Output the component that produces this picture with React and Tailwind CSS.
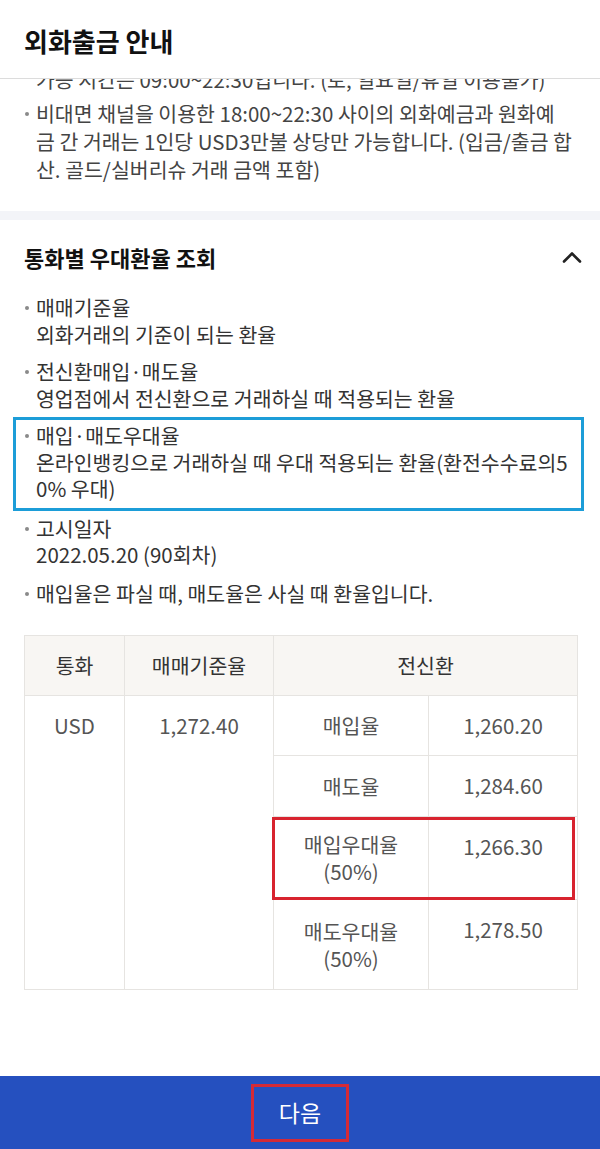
import React from 'react';

const font = "font-['Noto_Sans_CJK_KR','Noto_Sans',sans-serif]";

/** Small grey bullet dot used in front of each notice item. */
function Dot({ top = 'pt-[13px]' }) {
  return (
    <span className={`w-[12px] shrink-0 ${top}`}>
      <span className="block w-[4px] h-[4px] ml-[1px] rounded-full bg-[#8a8a8a]" />
    </span>
  );
}

function Item({ lines, className = '', dot }) {
  return (
    <li className={`flex ${className}`}>
      <Dot top={dot} />
      <div>
        {lines.map((l, i) => (
          <div key={i} className="whitespace-nowrap">{l}</div>
        ))}
      </div>
    </li>
  );
}

function ChevronUp() {
  return (
    <svg width="20" height="12" viewBox="0 0 20 12" fill="none">
      <path d="M2 10.5 10 2.5l8 8" stroke="#222" strokeWidth="2.6" strokeLinecap="round" strokeLinejoin="round" />
    </svg>
  );
}

const rows = [
  { label: ['매입율'], value: '1,260.20', h: 'h-[60px]' },
  { label: ['매도율'], value: '1,284.60', h: 'h-[61px]' },
  { label: ['매입우대율', '(50%)'], value: '1,266.30', h: 'h-[83px]' },
  { label: ['매도우대율', '(50%)'], value: '1,278.50', h: 'h-[90px]' },
];

export default function App() {
  return (
    <div className={`${font} w-[600px] h-[1149px] flex flex-col bg-white overflow-hidden`}>
      {/* header */}
      <header className="h-[79px] shrink-0 border-b border-[#dcdcdc] px-6 pt-[4px] flex items-center">
        <h1 className="text-[26px] font-bold text-[#111] leading-none">외화출금 안내</h1>
      </header>

      <main className="flex-1 overflow-hidden">
        {/* scrolled notice, first item cut by header */}
        <ul className="px-6 text-[20.5px] leading-[28px] text-[#444]">
          <li className="-mt-[14px] pl-[12px] whitespace-nowrap">가능 시간은 09:00~22:30입니다. (토, 일요일/휴일 이용불가)</li>
          <Item
            className="mt-[6px]"
            lines={[
              '비대면 채널을 이용한 18:00~22:30 사이의 외화예금과 원화예',
              '금 간 거래는 1인당 USD3만불 상당만 가능합니다. (입금/출금 합',
              '산. 골드/실버리슈 거래 금액 포함)',
            ]}
          />
        </ul>

        <div className="h-[9px] mt-[28px] bg-[#f3f4f8]" />

        <section className="px-6 pt-[22px]">
          <div className="flex items-center justify-between h-[30px]">
            <h2 className="text-[22px] font-bold text-[#111]">통화별 우대환율 조회</h2>
            <span className="mr-[-6px]"><ChevronUp /></span>
          </div>

          <ul className="mt-[22px] text-[20.5px] leading-[26.5px] text-[#333]">
            <Item dot="pt-[12px]" lines={['매매기준율', '외화거래의 기준이 되는 환율']} />
            <Item dot="pt-[12px]" className="mt-[11px]" lines={['전신환매입·매도율', '영업점에서 전신환으로 거래하실 때 적용되는 환율']} />
            <li className="mt-[6px] ml-[-11px] mr-[-8px] border-[3px] border-[#1c9dd8] pl-[8px] pt-[2px] pb-[6px]">
              <ul>
                <Item
                  dot="pt-[12px]"
                  lines={[
                    '매입·매도우대율',
                    '온라인뱅킹으로 거래하실 때 우대 적용되는 환율(환전수수료의5',
                    '0% 우대)',
                  ]}
                />
              </ul>
            </li>
            <Item dot="pt-[12px]" className="mt-[4px]" lines={['고시일자', '2022.05.20 (90회차)']} />
            <Item dot="pt-[12px]" className="mt-[12px]" lines={['매입율은 파실 때, 매도율은 사실 때 환율입니다.']} />
          </ul>

          {/* rate table */}
          <div className="relative mt-[29px] w-[553px]">
            <table className="w-[553px] table-fixed border-collapse text-[20.5px] leading-[27px] text-[#555] text-center">
              <colgroup>
                <col className="w-[100px]" />
                <col className="w-[149px]" />
                <col className="w-[155px]" />
                <col className="w-[149px]" />
              </colgroup>
              <thead>
                <tr className="h-[60px] bg-[#f8f6f3] text-[#333]">
                  <th className="font-normal border border-[#e6e4e1]">통화</th>
                  <th className="font-normal border border-[#e6e4e1]">매매기준율</th>
                  <th colSpan={2} className="font-normal border border-[#e6e4e1]">전신환</th>
                </tr>
              </thead>
              <tbody>
                {rows.map((r, i) => (
                  <tr key={i} className={r.h}>
                    {i === 0 && (
                      <>
                        <td rowSpan={4} className="align-top pt-[16px] border border-[#e6e4e1]">USD</td>
                        <td rowSpan={4} className="align-top pt-[16px] border border-[#e6e4e1]">1,272.40</td>
                      </>
                    )}
                    <td className="align-middle border border-[#e6e4e1]">
                      {r.label.map((l) => (
                        <div key={l}>{l}</div>
                      ))}
                    </td>
                    <td className="align-top pt-[16px] border border-[#e6e4e1]">{r.value}</td>
                  </tr>
                ))}
              </tbody>
            </table>
            <div className="absolute left-[248px] top-[182px] w-[303px] h-[83px] border-[3px] border-[#d8232f]" />
          </div>
        </section>
      </main>

      <footer className="h-[73px] shrink-0 bg-[#2550bf] flex items-center justify-center">
        <button className="w-[98px] h-[58px] border-[3px] border-[#d42a36] flex items-center justify-center text-white text-[23px]">
          다음
        </button>
      </footer>
    </div>
  );
}
